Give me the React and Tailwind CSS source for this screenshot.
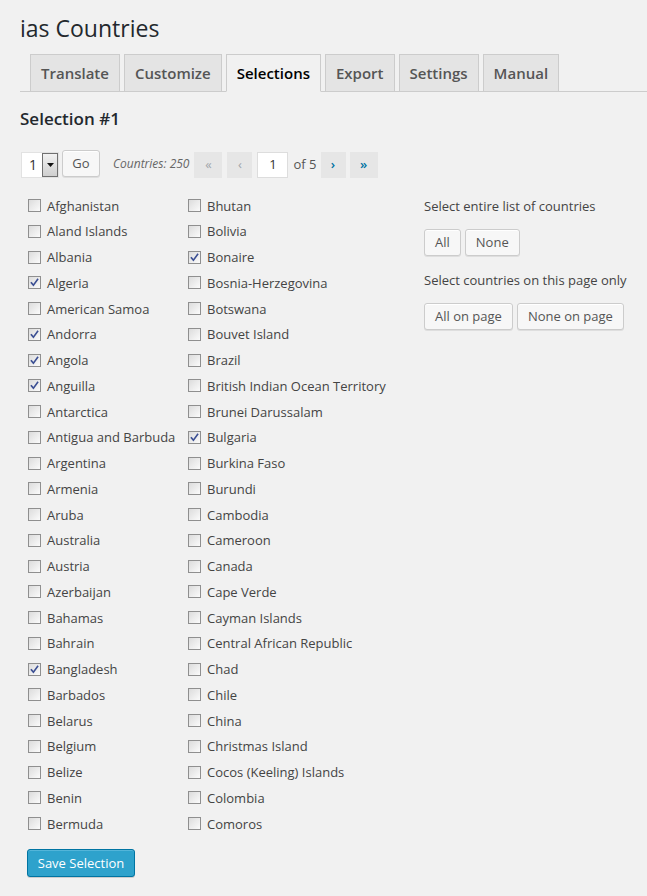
import React from "react";

const col1 = [
  ["Afghanistan", false], ["Aland Islands", false], ["Albania", false], ["Algeria", true],
  ["American Samoa", false], ["Andorra", true], ["Angola", true], ["Anguilla", true],
  ["Antarctica", false], ["Antigua and Barbuda", false], ["Argentina", false], ["Armenia", false],
  ["Aruba", false], ["Australia", false], ["Austria", false], ["Azerbaijan", false],
  ["Bahamas", false], ["Bahrain", false], ["Bangladesh", true], ["Barbados", false],
  ["Belarus", false], ["Belgium", false], ["Belize", false], ["Benin", false], ["Bermuda", false],
];
const col2 = [
  ["Bhutan", false], ["Bolivia", false], ["Bonaire", true], ["Bosnia-Herzegovina", false],
  ["Botswana", false], ["Bouvet Island", false], ["Brazil", false], ["British Indian Ocean Territory", false],
  ["Brunei Darussalam", false], ["Bulgaria", true], ["Burkina Faso", false], ["Burundi", false],
  ["Cambodia", false], ["Cameroon", false], ["Canada", false], ["Cape Verde", false],
  ["Cayman Islands", false], ["Central African Republic", false], ["Chad", false], ["Chile", false],
  ["China", false], ["Christmas Island", false], ["Cocos (Keeling) Islands", false], ["Colombia", false],
  ["Comoros", false],
];

const tabs = ["Translate", "Customize", "Selections", "Export", "Settings", "Manual"];

function Check({ checked }) {
  return (
    <span className="relative block w-[13px] h-[13px] shrink-0 border border-[#8f8f8f] bg-gradient-to-br from-[#dcdcdc] to-[#fbfbfb]">
      {checked && (
        <svg className="absolute left-[1px] top-[1px]" width="9" height="9" viewBox="0 0 9 9">
          <path d="M1.4 4.8 L3.4 7.2 L7.6 1.4" fill="none" stroke="#3b4f93" strokeWidth="1.6" strokeLinecap="square" />
        </svg>
      )}
    </span>
  );
}

function Row({ name, checked }) {
  return (
    <div className="h-[25.75px] flex items-center">
      <Check checked={checked} />
      <span className="ml-[6px] text-[13px] leading-[20px] text-[#444] whitespace-nowrap">{name}</span>
    </div>
  );
}

function Btn({ children }) {
  return (
    <button className="h-[27px] px-[10px] border border-[#cccccc] rounded-[3px] bg-[#f7f7f7] text-[13px] text-[#555] leading-[25px] shadow-[inset_0_1px_0_#fff,0_1px_0_rgba(0,0,0,0.08)]">
      {children}
    </button>
  );
}

export default function App() {
  return (
    <div className="min-h-[896px] bg-[#f1f1f1] px-[20px] pb-[20px] font-['Open_Sans',sans-serif]">
      <h2 className="pt-[14px] text-[23px] leading-[29px] text-[#23282d] font-normal">ias Countries</h2>

      <div className="mt-[11px] -mr-[20px] h-[38px] flex items-end gap-[4px] pl-[10px] border-b border-[#cccccc]">
        {tabs.map((t) => {
          const active = t === "Selections";
          return (
            <div
              key={t}
              className={`h-[38px] -mb-px px-[10px] pt-[6px] border border-[#cccccc] text-[15px] leading-[24px] font-semibold ${
                active ? "bg-[#f1f1f1] text-black border-b-[#f1f1f1]" : "bg-[#e4e4e4] text-[#555]"
              }`}
            >
              {t}
            </div>
          );
        })}
      </div>

      <h3 className="mt-[15px] text-[17px] leading-[24px] font-semibold text-[#23282d]">Selection #1</h3>

      <div className="mt-[19px] h-[28px] flex items-center">
        <div className="ml-[1px] w-[38px] h-[26px] mt-[2px] bg-white border border-[#e2e2e2] flex items-center">
          <span className="pl-[7px] w-[20px] text-[14px] text-[#333] leading-[20px]">1</span>
          <span className="w-[16px] h-[24px] border border-[#707070] bg-gradient-to-b from-[#f2f2f2] to-[#cfcfcf] flex items-center justify-center">
            <svg width="7" height="4" viewBox="0 0 7 4"><path d="M0 0h7L3.5 4z" fill="#111" /></svg>
          </span>
        </div>
        <div className="ml-[3px] mb-[2px]">
          <button className="w-[38px] h-[27px] border border-[#cccccc] rounded-[3px] bg-[#f7f7f7] text-[13px] text-[#555] leading-[25px] shadow-[inset_0_1px_0_#fff,0_1px_0_rgba(0,0,0,0.08)]">Go</button>
        </div>
        <span className="ml-[13px] text-[12px] italic text-[#666]">Countries: 250</span>
        <div className="ml-[5px] mt-[2px] flex items-center">
          <span className="w-[28px] h-[26px] bg-[#e6e6e6] text-[#a0a5aa] text-[13px] flex items-center justify-center">«</span>
          <span className="ml-[5px] w-[25px] h-[26px] bg-[#e6e6e6] text-[#a0a5aa] text-[13px] flex items-center justify-center">‹</span>
          <span className="ml-[5px] w-[31px] h-[26px] bg-white border border-[#dddddd] text-[13px] text-[#333] flex items-center justify-center">1</span>
          <span className="ml-[5px] text-[13px] text-[#555]">of 5</span>
          <span className="ml-[4px] w-[25px] h-[26px] bg-[#e6e6e6] text-[#0074a2] text-[13px] font-semibold flex items-center justify-center">›</span>
          <span className="ml-[4px] w-[28px] h-[26px] bg-[#e6e6e6] text-[#0074a2] text-[13px] font-semibold flex items-center justify-center">»</span>
        </div>
      </div>

      <div className="mt-[14.75px] flex">
        <div className="ml-[8px] w-[160px]">
          {col1.map(([n, c]) => (
            <Row key={n} name={n} checked={c} />
          ))}
        </div>
        <div className="w-[236px]">
          {col2.map(([n, c]) => (
            <Row key={n} name={n} checked={c} />
          ))}
        </div>
        <div className="pt-[3px]">
          <p className="text-[13px] leading-[20px] text-[#444]">Select entire list of countries</p>
          <div className="mt-[13px] flex gap-[4px]">
            <Btn>All</Btn>
            <Btn>None</Btn>
          </div>
          <p className="mt-[14px] text-[13px] leading-[20px] text-[#444]">Select countries on this page only</p>
          <div className="mt-[13px] flex gap-[4px]">
            <Btn>All on page</Btn>
            <Btn>None on page</Btn>
          </div>
        </div>
      </div>

      <div className="mt-[12px] ml-[7px]">
        <button className="w-[108px] h-[28px] rounded-[3px] border border-[#0074a2] bg-[#2ea2cc] text-white text-[13px] leading-[26px] shadow-[inset_0_1px_0_rgba(120,200,230,0.5),0_1px_0_rgba(0,0,0,0.15)]">
          Save Selection
        </button>
      </div>
    </div>
  );
}
